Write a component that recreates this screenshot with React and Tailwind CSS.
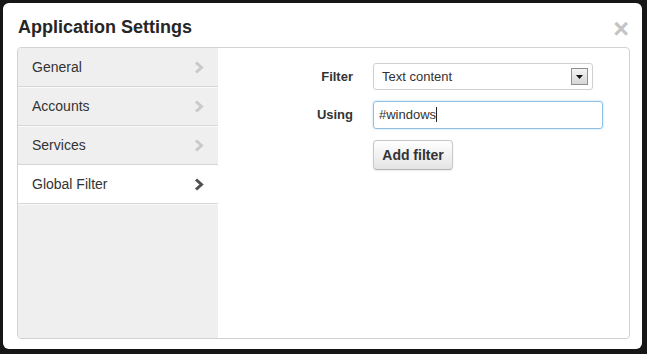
import { useState } from 'react'

const items = ['General', 'Accounts', 'Services', 'Global Filter']

function Chevron({ active }) {
  return (
    <svg width="10" height="13" viewBox="0 0 10 13" className="shrink-0">
      <polyline
        points="2,1.5 7.5,6.5 2,11.5"
        fill="none"
        stroke={active ? '#505050' : '#c9c9c9'}
        strokeWidth="3"
      />
    </svg>
  )
}

export default function App() {
  const [active, setActive] = useState('Global Filter')

  return (
    <div className="w-[647px] h-[354px] bg-[#161616] pt-[3px] pl-[3px] font-['Liberation_Sans',Arial,sans-serif] text-[#333]">
      <div className="w-[639px] h-[346px] bg-white rounded-[6px] flex flex-col">
        {/* Header */}
        <div className="h-[44px] shrink-0 flex items-start justify-between pl-[15px] pr-[13px] pt-[12px]">
          <h3 className="text-[18px] leading-[24px] font-bold text-[#262626]">Application Settings</h3>
          <span className="text-[27px] leading-[24px] font-bold text-[#c4c4c4] mt-[2px]">×</span>
        </div>

        {/* Body */}
        <div className="ml-[14px] mr-[12px] h-[292px] border border-[#d2d2d2] rounded-[4px] flex overflow-hidden">
          <div className="w-[200px] bg-[#efefef] flex flex-col">
            {items.map(it => (
              <div
                key={it}
                onClick={() => setActive(it)}
                className={
                  'h-[39px] flex items-center justify-between pl-[14px] pr-[14px] border-b border-[#d6d6d6] shadow-[0_1px_0_#fafafa] text-[14px] cursor-pointer ' +
                  (active === it ? 'bg-white text-[#333]' : 'text-[#333]')
                }
              >
                <span>{it}</span>
                <Chevron active={active === it} />
              </div>
            ))}
          </div>

          <div className="flex-1 pt-[15px]">
            <div className="flex items-center">
              <label className="w-[135px] text-right text-[13px] font-bold">Filter</label>
              <div className="ml-[20px] w-[220px] h-[27px] border border-[#cfcfcf] rounded-[3px] flex items-center justify-between pl-[8px] pr-[4px] text-[13px]">
                <span>Text content</span>
                <span className="w-[17px] h-[17px] border border-[#8f8f8f] bg-gradient-to-b from-[#f4f4f4] to-[#d6d6d6] flex items-center justify-center">
                  <svg width="7" height="4" viewBox="0 0 7 4">
                    <polygon points="0,0 7,0 3.5,4" fill="#111" />
                  </svg>
                </span>
              </div>
            </div>

            <div className="flex items-center mt-[11px]">
              <label className="w-[135px] text-right text-[13px] font-bold">Using</label>
              <div className="ml-[20px] w-[230px] h-[28px] border border-[#8fbde3] rounded-[3px] shadow-[0_0_3px_rgba(82,168,236,0.35)] flex items-center pl-[5px] pb-px text-[13px]">
                <span>#windows</span>
                <span className="w-px h-[15px] bg-[#222]" />
              </div>
            </div>

            <div className="ml-[155px] mt-[11px]">
              <button className="w-[80px] h-[30px] border border-[#c8c8c8] border-b-[#b3b3b3] rounded-[4px] bg-gradient-to-b from-[#ffffff] to-[#e4e4e4] text-[14px] font-bold text-[#333] shadow-[0_1px_2px_rgba(0,0,0,0.08)]">
                Add filter
              </button>
            </div>
          </div>
        </div>
      </div>
    </div>
  )
}
